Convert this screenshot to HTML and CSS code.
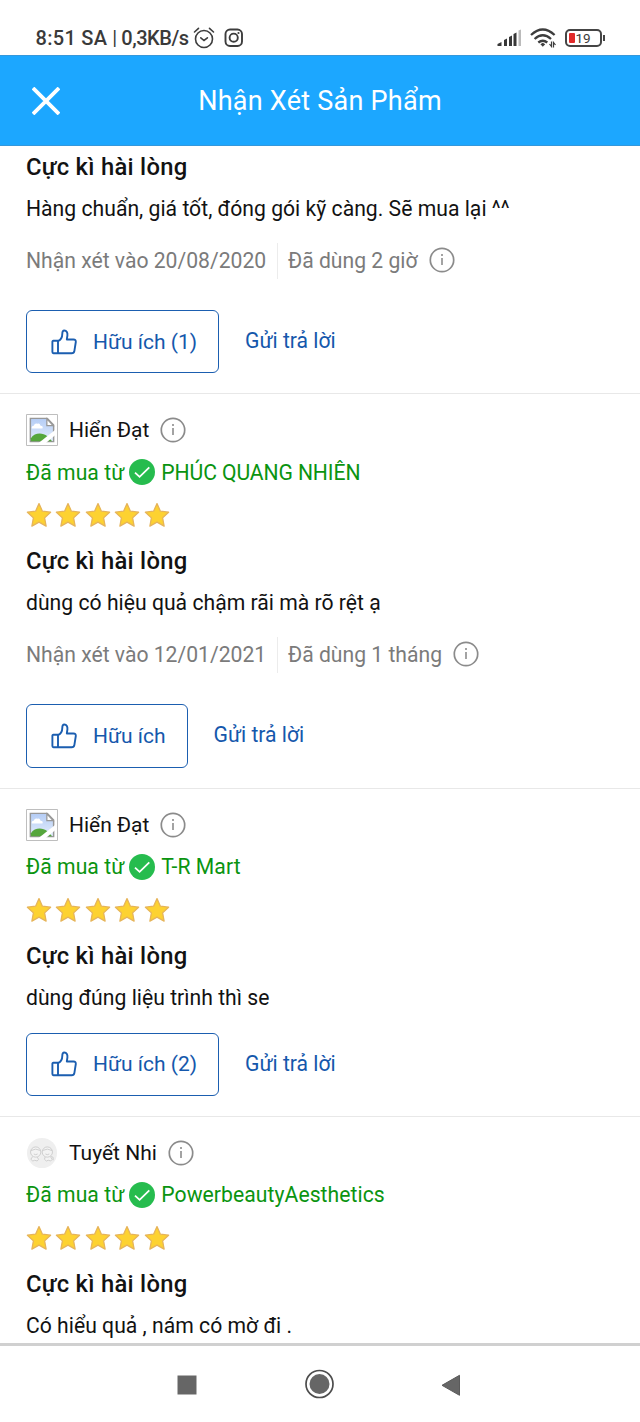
FILE: index.html
```html
<!DOCTYPE html>
<html lang="vi">
<head>
<meta charset="utf-8">
<title>Nhận Xét Sản Phẩm</title>
<link rel="stylesheet" href="styles.css">
</head>
<body>
<svg class="defs" aria-hidden="true">
  <defs>
    <linearGradient id="sky" x1="0" y1="0" x2="0" y2="1"><stop offset="0" stop-color="#b4ccf5"/><stop offset="1" stop-color="#e4eefc"/></linearGradient>
    <symbol id="info" viewBox="0 0 26 26"><circle cx="13" cy="13" r="11.7" fill="none" stroke="#8b8b8b" stroke-width="1.7"/><path d="M13 11v7" stroke="#858585" stroke-width="1.5"/><circle cx="13" cy="8" r="1" fill="#858585"/></symbol>
    <symbol id="check" viewBox="0 0 26 26"><circle cx="13" cy="13" r="13" fill="#26bc4e"/><path d="M6 13.6l4.6 4.2L20.3 8.4" fill="none" stroke="#fff" stroke-width="1.8"/></symbol>
    <symbol id="star" viewBox="0 0 26 26"><path d="M13 1.6l3.4 7.6 8.2 1-6 5.7 1.5 8.2-7.1-4-7.1 4 1.5-8.2-6-5.7 8.2-1z" fill="#fdd231" stroke="#e6b45a" stroke-width="1.3" stroke-linejoin="round"/></symbol>
    <symbol id="thumb" viewBox="0 0 26 26"><path d="M7 11.8H2.300q-.9 0-.9 1v10.300q0 1.100 1 1.100H7zM7 12.200c3.400-1.600 4.300-4.200 4.300-7.500 0-2 .7-3.200 2-3.200 2.400 0 3.400 2.400 3.100 5l-.6 4h6.700q2.600 0 2.300 2.500l-1.400 8.800q-.4 2.400-2.800 2.400H7" fill="none" stroke="#1b5eb0" stroke-width="1.900" stroke-linejoin="round"/></symbol>
    <symbol id="broken" viewBox="0 0 33 33"><path d="M.5.5h32v32H.5z" fill="#fff" stroke="#bcbcbc"/><path d="M4.500 4.500H22l6.500 7v17h-24z" fill="url(#sky)" stroke="#989898" stroke-width="1.5"/><path d="M6 15q-.5-3 2-3 1-3 4-2 2-1 3 2 3 0 2 3z" fill="#fff"/><path d="M5 28v-3c4-6 12-6 17-2l5 5z" fill="#55a63c"/><path d="M21.500 5v7H28z" fill="#fff" stroke="#989898" stroke-width="1.3"/><path d="M13 30L30 16.500v5.500L20.500 30z" fill="#fff"/></symbol>
  </defs>
</svg>
<div class="screen">
  <div class="status">
    <span class="clock">8:51 SA</span><span class="bar">|</span><span class="speed">0,3KB/s</span>
    <svg class="alarm" viewBox="0 0 22 22" width="22" height="22"><g fill="none" stroke="#3d3d3d" stroke-width="1.6" stroke-linecap="round"><circle cx="11" cy="12" r="8.500"/><path d="M1.500 5l4-3.600M20.500 5l-4-3.600M7.800 10.800l3.200 2.700 3.400-2.700"/></g></svg>
    <svg class="insta" viewBox="0 0 20 20" width="20" height="20"><g fill="none" stroke="#3d3d3d" stroke-width="1.900"><rect x="1.500" y="1.500" width="16.500" height="16.500" rx="4.500"/><circle cx="9.700" cy="9.700" r="4.100"/></g><circle cx="14.500" cy="5" r="1.100" fill="#3d3d3d"/></svg>
    <span class="grow"></span>
    <svg viewBox="0 0 25 18" width="25" height="18"><path d="M.5 17v-2l4-2v4zM7 17V11l3-1.500V17zM12 17V8l3-1.500V17zM16.500 17V5l3-1.500V17z" fill="#383838"/><path d="M21.500 17V1.500L24 .5V17z" fill="#bbb"/></svg>
    <svg class="wifi" viewBox="0 0 26 20" width="26" height="20"><g fill="none" stroke="#3d3d3d" stroke-width="2.300"><path d="M1 7q11.800-11 23.600 0M4.600 11q8.200-7.400 16.400 0M8.300 14.500q4.500-3.600 9 0"/></g><path d="M12.800 14.800l2.400 1.500-2.400 2.400-2.400-2.400z" fill="#3d3d3d"/><path d="M21.500 13.500v5l-2-2.500M23.500 19.500v-5l2 2.500" fill="none" stroke="#3d3d3d" stroke-width="1.200"/></svg>
    <span class="battery"><i class="charge"></i>19</span><i class="nub"></i>
  </div>
  <header class="header">
    <svg class="close" viewBox="0 0 28 28" width="28" height="28"><path d="M1 1l26 26M27 1L1 27" stroke="#fff" stroke-width="3.800"/></svg>
    <h1>Nhận Xét Sản Phẩm</h1>
  </header>
  <main class="reviews">
    <article class="review first">
      <h2>Cực kì hài lòng</h2>
      <p class="text">Hàng chuẩn, giá tốt, đóng gói kỹ càng. Sẽ mua lại ^^</p>
      <div class="meta"><span class="date">Nhận xét vào 20/08/2020</span><span class="used">Đã dùng 2 giờ</span><svg class="info"><use href="#info"/></svg></div>
      <div class="actions"><button class="like"><svg><use href="#thumb"/></svg>Hữu ích (1)</button><a class="reply">Gửi trả lời</a></div>
    </article>
    <article class="review">
      <div class="user"><svg class="avatar"><use href="#broken"/></svg><span>Hiển Đạt</span><svg class="info"><use href="#info"/></svg></div>
      <div class="seller">Đã mua từ<svg><use href="#check"/></svg><span class="caps">PHÚC QUANG NHIÊN</span></div>
      <div class="stars"><svg><use href="#star"/></svg><svg><use href="#star"/></svg><svg><use href="#star"/></svg><svg><use href="#star"/></svg><svg><use href="#star"/></svg></div>
      <h2>Cực kì hài lòng</h2>
      <p class="text">dùng có hiệu quả chậm rãi mà rõ rệt ạ</p>
      <div class="meta"><span class="date">Nhận xét vào 12/01/2021</span><span class="used">Đã dùng 1 tháng</span><svg class="info"><use href="#info"/></svg></div>
      <div class="actions"><button class="like"><svg><use href="#thumb"/></svg>Hữu ích</button><a class="reply">Gửi trả lời</a></div>
    </article>
    <article class="review">
      <div class="user"><svg class="avatar"><use href="#broken"/></svg><span>Hiển Đạt</span><svg class="info"><use href="#info"/></svg></div>
      <div class="seller">Đã mua từ<svg><use href="#check"/></svg><span>T-R Mart</span></div>
      <div class="stars"><svg><use href="#star"/></svg><svg><use href="#star"/></svg><svg><use href="#star"/></svg><svg><use href="#star"/></svg><svg><use href="#star"/></svg></div>
      <h2>Cực kì hài lòng</h2>
      <p class="text">dùng đúng liệu trình thì se</p>
      <div class="actions"><button class="like"><svg><use href="#thumb"/></svg>Hữu ích (2)</button><a class="reply">Gửi trả lời</a></div>
    </article>
    <article class="review last">
      <div class="user"><svg class="avatar" viewBox="0 0 33 33"><circle cx="16.500" cy="16.500" r="15.500" fill="#efefef"/><g fill="#f3f3f3" stroke="#cdcdcd" stroke-width="1"><path d="M7 20l-2 3q2 3 4 1 3 2 4-1l-2-3M20 20l-1 3q2 3 4 1 3 2 4-1l-2-3"/><circle cx="10" cy="15.500" r="5.300"/><circle cx="22" cy="15.500" r="5.300"/><path d="M5 14q5-3 10 0M17 14q5-3 10 0M8 17.500q2 1.500 4 0M20 17.500q2 1.500 4 0M26 20q3 0 2 4" fill="none"/></g></svg><span>Tuyết Nhi</span><svg class="info"><use href="#info"/></svg></div>
      <div class="seller">Đã mua từ<svg><use href="#check"/></svg><span>PowerbeautyAesthetics</span></div>
      <div class="stars"><svg><use href="#star"/></svg><svg><use href="#star"/></svg><svg><use href="#star"/></svg><svg><use href="#star"/></svg><svg><use href="#star"/></svg></div>
      <h2>Cực kì hài lòng</h2>
      <p class="text">Có hiểu quả , nám có mờ đi .</p>
    </article>
  </main>
  <nav class="nav">
    <svg viewBox="0 0 30 30"><path d="M5.500 6.500h19v19h-19z" fill="#666"/></svg>
    <svg viewBox="0 0 30 30"><circle cx="15.500" cy="15" r="13.500" fill="none" stroke="#4d4d4d" stroke-width="1.700"/><circle cx="15.500" cy="15" r="10" fill="#666"/></svg>
    <svg viewBox="0 0 30 30"><path d="M6 16.300L23.500 6.300v20z" fill="#666" stroke="#5a5a5a" stroke-linejoin="round"/></svg>
  </nav>
</div>
</body>
</html>
```
FILE: styles.css
```css
* { box-sizing: border-box; }
body { margin: 0; background: #fff; font-family: Roboto, "Noto Sans", sans-serif; color: #121212; }
h1, h2, p { margin: 0; font-weight: 400; }
svg { display: block; flex: none; }
.defs { position: absolute; width: 0; height: 0; }
.screen { width: 640px; height: 1422px; display: flex; flex-direction: column; overflow: hidden; }

.status { flex: none; height: 55px; padding: 20px 35.5px 0 35.5px; display: flex; align-items: center; color: #3a3a3a; font-size: 20px; font-weight: 500; white-space: nowrap; }
.clock { letter-spacing: .3px; }
.bar { margin: 0 4px 0 5px; font-weight: 400; }
.speed { letter-spacing: -.45px; }
.alarm { margin-left: 4px; }
.insta { margin-left: 9px; }
.grow { flex: 1; }
.wifi { margin-left: 8px; }
.battery { width: 37px; height: 18px; margin-left: 9px; padding-left: 2px; display: flex; align-items: center; gap: 1px; border: 2px solid #454545; border-radius: 5px; font-size: 13.5px; font-weight: 400; }
.charge { width: 6px; height: 10px; border-radius: 1px; background: #e12a2a; }
.nub { width: 2px; height: 6px; margin-left: 1px; background: #454545; }

.header { flex: none; height: 91px; display: grid; grid-template-columns: 80px 1fr 80px; align-items: center; background: #1ca7ff; border-top: 1px solid #3498dc; border-bottom: 1px solid #3498dc; color: #fff; }
.close { margin-left: 31.5px; }
.header h1 { font-size: 27px; text-align: center; letter-spacing: .25px; white-space: nowrap; }

.reviews { flex: 1; min-height: 0; overflow: hidden; }
.review { padding: 20px 26px; border-bottom: 1px solid #e8e8e8; font-size: 21.15px; white-space: nowrap; }
.review.first { padding-top: 0; }
.review.last { border-bottom: 0; }
.review h2 { height: 42px; line-height: 43px; font-size: 23.8px; font-weight: 500; letter-spacing: .28px; }
.text { height: 42px; line-height: 42px; letter-spacing: .02px; }
.info { width: 26px; height: 26px; }
.user { height: 32px; display: flex; align-items: center; gap: 11px; font-size: 21px; }
.user .avatar { width: 32px; height: 32px; }
.seller { height: 42px; margin-top: 5px; display: flex; align-items: center; gap: 5px; color: #0a9410; letter-spacing: .05px; }
.seller svg { width: 26px; height: 26px; margin-right: 1px; }
.seller .caps { letter-spacing: -.1px; }
.stars { height: 42px; margin: 1px 0 4px; display: flex; align-items: center; gap: 3.400px; }
.stars svg { width: 26px; height: 26px; }
.meta { height: 36px; margin: 13px 0 31px; display: flex; align-items: center; color: #7b7b7b; }
.meta .info { margin-bottom: 2px; }
.date { width: 252px; height: 36px; line-height: 36px; border-right: 1px solid #ececec; }
.used { height: 36px; line-height: 36px; margin: 0 11px 0 10px; }
.actions { margin-top: 14px; display: flex; align-items: center; gap: 26px; color: #1558ac; }
.like { height: 63.3px; padding: 0 21px 0 24px; display: flex; align-items: center; gap: 16px; border: 1.500px solid #1b5eb0; border-radius: 6px; background: #fff; color: inherit; font: inherit; font-size: 21px; }
.reply { padding-bottom: 2px; }
.like svg { width: 26px; height: 26px; }

.nav { flex: none; height: 79px; padding: 0 174px 0 172px; display: flex; justify-content: space-between; align-items: center; border-top: 3px solid #d0d0d0; background: #fff; }
.nav svg { width: 30px; height: 30px; }
```
